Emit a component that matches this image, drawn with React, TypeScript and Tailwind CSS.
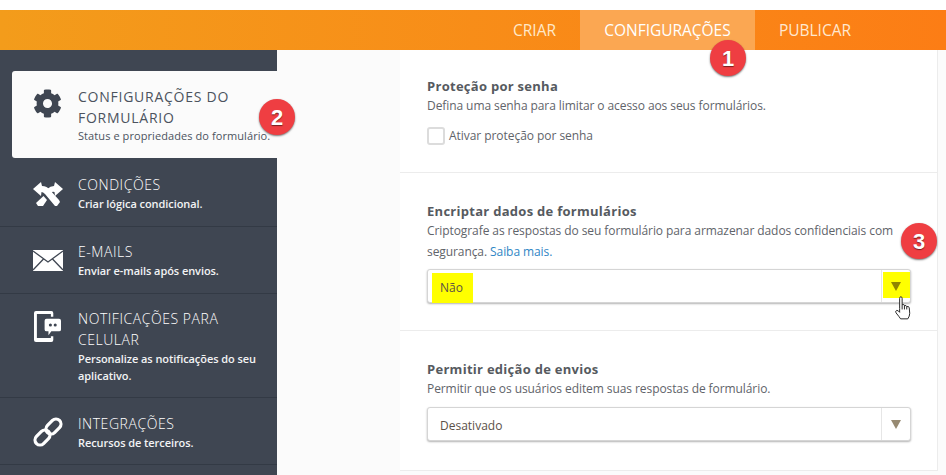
import { FaCog } from "react-icons/fa";

const font = "font-['Open_Sans','Noto_Sans',sans-serif]";

function Badge({ n, className }: { n: number; className: string }) {
  return (
    <div className={`absolute flex h-9 w-9 items-center justify-center rounded-full bg-[#ef3e42] text-[22px] font-bold text-white shadow-[0_1px_2px_rgba(0,0,0,0.55)] font-['Liberation_Sans',sans-serif] [text-shadow:0_1px_1px_rgba(0,0,0,0.5)] ${className}`}>
      {n}
    </div>
  );
}

function ToolsIcon() {
  return (
    <svg viewBox="0 0 30 24" className="h-6 w-[30px]" fill="#fff">
      <path d="M0 7 L8 0 L9 4 Q14 4 17 8 L26 18 L27 20 L24 24 L22 24 L12 12 Q10 10 8.5 10 L8 14 Z" />
      <path d="M30 7 L22 0 L21 4 Q17 4 15 6.5 L13 9 L16.5 13 L19 10 Q20 9.5 21.5 10 L22 14 Z" />
      <path d="M10.5 14 L14 18 L10 24 L5 24 L3 21 Z" />
    </svg>
  );
}

function MailIcon() {
  return (
    <svg viewBox="0 0 30 21" className="h-[21px] w-[30px]">
      <rect x="0" y="0" width="30" height="21" fill="#fff" />
      <path d="M0 1 L15 12 L30 1 M0 20 L10.5 9 M30 20 L19.5 9" fill="none" stroke="#3f4652" strokeWidth="1.3" />
    </svg>
  );
}

function PhoneIcon() {
  return (
    <svg viewBox="0 0 28 32" className="ml-px h-[31px] w-[27px]" fill="#fff">
      <path d="M2 0 H18 Q20 0 20 2 V6 H17.5 V3 H3 V28 H17.5 V26 H20 V30 Q20 32 18 32 H2 Q0 32 0 30 V2 Q0 0 2 0 Z" />
      <path d="M13 8 H26 Q28 8 28 10 V19 Q28 21 26 21 H18 L15 25 V21 H13 Q11 21 11 19 V10 Q11 8 13 8 Z" />
      <circle cx="17" cy="14.5" r="1.6" fill="#3f4652" />
      <circle cx="22" cy="14.5" r="1.6" fill="#3f4652" />
    </svg>
  );
}

function LinkIcon() {
  return (
    <svg viewBox="0 0 30 30" className="h-[30px] w-[30px]" fill="none" stroke="#fff" strokeWidth="3.2">
      <rect x="12" y="4.5" width="17" height="10" rx="5" transform="rotate(-45 20.5 9.5)" />
      <rect x="1" y="15.5" width="17" height="10" rx="5" transform="rotate(-45 9.5 20.5)" />
    </svg>
  );
}

function HandCursor() {
  return (
    <svg viewBox="0 0 17 25" className="absolute left-[894px] top-[296px] h-6 w-[18px]" fill="#fff" stroke="#222" strokeWidth="1" strokeLinejoin="round">
      <path d="M5 13 V2.5 Q5 .8 6.3 .8 Q7.6 .8 7.6 2.5 V9 Q10 8.4 10 10 Q12 9.4 12.4 11 Q14.8 10.4 15 12.4 L15.5 18 Q15.5 21 13.5 23.8 H6 Q4.5 21.5 1.2 17.5 Q.2 15.5 2 15 Q3.6 14.8 5 17 Z" />
      <path d="M10 10 V14 M12.4 11 V14 M7.6 9 V14" fill="none" />
    </svg>
  );
}

function NavItem({ icon, title, sub, height, iconTop, titleTop }: { icon: React.ReactNode; title: string; sub: string; height: string; iconTop: string; titleTop: string }) {
  return (
    <div className={`flex border-b border-[#333a45] pl-[33px] ${height}`}>
      <div className={`w-[45px] shrink-0 ${iconTop}`}>{icon}</div>
      <div className={`w-[196px] ${titleTop}`}>
        <div className="text-[14px] font-light leading-[21px] tracking-[0.55px] text-white">{title}</div>
        <div className="text-[11px] font-semibold leading-[17px] tracking-[-0.07px] text-[#f2f3f4]">{sub}</div>
      </div>
    </div>
  );
}

function Select({ value, highlight }: { value: string; highlight?: boolean }) {
  return (
    <div className="flex h-[34px] w-[484px] items-stretch rounded-[3px] border border-[#d5d5d5] bg-white shadow-[0_1px_2px_rgba(0,0,0,0.3)]">
      <div className="relative flex flex-1 items-center pl-3 pt-[3px] text-[12px] text-[#5b5148]">
        {highlight && <div className="absolute left-[4px] top-[3px] h-[30px] w-[41px] bg-[#ffff00]" />}
        <span className="relative">{value}</span>
      </div>
      <div className="relative flex w-[29px] items-center justify-center border-l border-[#e6e6e6]">
        {highlight && <div className="absolute right-0 top-[2px] h-[26px] w-[27px] bg-[#ffff00]" />}
        <div className={`relative h-0 w-0 border-x-[5px] border-t-[9px] border-x-transparent ${highlight ? "border-t-[#8f8500]" : "border-t-[#978a72]"}`} />
      </div>
    </div>
  );
}

export default function App() {
  return (
    <div className={`relative h-[475px] w-[946px] overflow-hidden bg-white pt-[10px] ${font}`}>
      <header className="flex h-10 justify-end bg-gradient-to-r from-[#f39c1b] to-[#fc7d15] pr-[71px] pt-px text-[15.5px] tracking-[-0.02px] text-white">
        <div className="flex items-center px-6 text-[#ffe8c8]">CRIAR</div>
        <div className="-mt-px flex w-[175px] items-center justify-center bg-[#fba752] pt-px">CONFIGURAÇÕES</div>
        <div className="flex items-center px-6 text-[#ffe8d0]">PUBLICAR</div>
      </header>

      <div className="flex h-[425px] bg-[#fbfbfb]">
        <aside className="h-full w-[277px] shrink-0 bg-[#3f4652] pt-[21px]">
          <div className="ml-3 flex h-[87px] rounded-l-[3px] bg-[#fbfbfb] pl-[21px]">
            <div className="w-[45px] shrink-0 pt-[18px]">
              <FaCog className="h-[29px] w-[29px] text-[#3f4652]" />
            </div>
            <div className="w-[200px] pt-[15px]">
              <div className="text-[14px] leading-[21px] tracking-[0.75px] text-[#4c535e]">
                CONFIGURAÇÕES DO FORMULÁRIO
              </div>
              <div className="mt-px whitespace-nowrap text-[11px] leading-[14px] tracking-[0.08px] text-[#4c535e]">Status e propriedades do formulário.</div>
            </div>
          </div>
          <NavItem height="h-[69px]" iconTop="pt-[24px]" titleTop="pt-[16px]" icon={<ToolsIcon />} title="CONDIÇÕES" sub="Criar lógica condicional." />
          <NavItem height="h-[67px]" iconTop="pt-[23px]" titleTop="pt-[14px]" icon={<MailIcon />} title="E-MAILS" sub="Enviar e-mails após envios." />
          <NavItem height="h-[104px]" iconTop="pt-[17px]" titleTop="pt-[14px]" icon={<PhoneIcon />} title="NOTIFICAÇÕES PARA CELULAR" sub="Personalize as notificações do seu aplicativo." />
          <NavItem height="h-[67px]" iconTop="pt-[19px]" titleTop="pt-[15px]" icon={<LinkIcon />} title="INTEGRAÇÕES" sub="Recursos de terceiros." />
        </aside>

        <main className="ml-[123px] w-[538px] self-start border-r border-[#ececec] bg-white">
          <section className="h-[123px] border-b border-[#ececec] px-[27px] pt-[27px]">
            <h2 className="text-[13px] font-bold leading-[19px] tracking-[0.28px] text-[#565a60]">Proteção por senha</h2>
            <p className="text-[12px] leading-[19px] tracking-[-0.08px] text-[#5f646a]">Defina uma senha para limitar o acesso aos seus formulários.</p>
            <label className="mt-[12px] flex items-center text-[12px] tracking-[-0.05px] text-[#5f646a]">
              <span className="mr-[4px] h-[18px] w-[18px] rounded-[3px] border-2 border-[#dcdcdc] bg-white" />
              Ativar proteção por senha
            </label>
          </section>
          <section className="h-[158px] border-b border-[#ececec] px-[27px] pt-[29px]">
            <h2 className="text-[13px] font-bold leading-[19px] tracking-[0.28px] text-[#565a60]">Encriptar dados de formulários</h2>
            <p className="-mt-px w-[484px] text-[12px] leading-[21px] tracking-[-0.08px] text-[#5f646a]">
              Criptografe as respostas do seu formulário para armazenar dados confidenciais com segurança. <span className="text-[#2f86c5]">Saiba mais.</span>
            </p>
            <div className="mt-[7px]">
              <Select value="Não" highlight />
            </div>
          </section>
          <section className="h-[140px] border-b border-[#ececec] px-[27px] pt-[29px]">
            <h2 className="text-[13px] font-bold leading-[19px] tracking-[0.28px] text-[#565a60]">Permitir edição de envios</h2>
            <p className="text-[12px] leading-[19px] tracking-[-0.08px] text-[#5f646a]">Permitir que os usuários editem suas respostas de formulário.</p>
            <div className="mt-[9px]">
              <Select value="Desativado" />
            </div>
          </section>
        </main>
      </div>

      <Badge n={1} className="left-[710px] top-[40px]" />
      <Badge n={2} className="left-[259px] top-[99px]" />
      <Badge n={3} className="left-[901px] top-[223px]" />
      <HandCursor />
    </div>
  );
}
